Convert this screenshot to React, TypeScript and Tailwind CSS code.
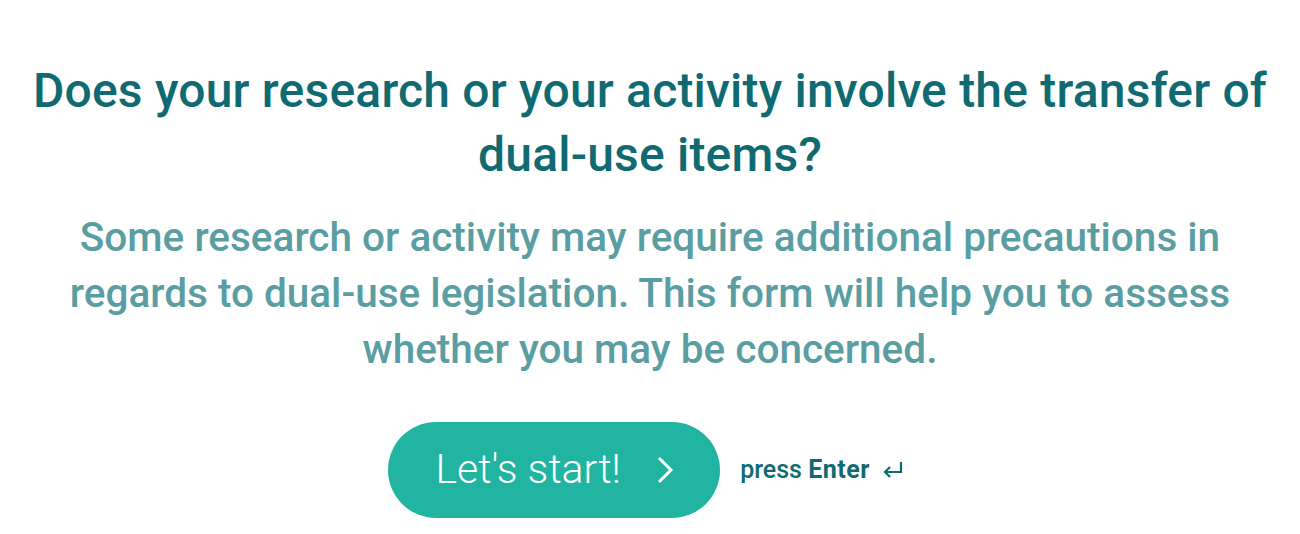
import React from 'react';

const ChevronRight = () => (
  <svg width="24" height="32" viewBox="0 0 24 32" fill="none" stroke="currentColor" strokeWidth="3" strokeLinecap="square">
    <path d="M7 5 L18 16 L7 27" />
  </svg>
);

const ReturnArrow = () => (
  <svg width="22" height="18" viewBox="0 0 22 18" fill="none" stroke="currentColor" strokeWidth="2.2">
    <path d="M19 1 V11 H3" />
    <path d="M8 6 L3 11 L8 16" />
  </svg>
);

export default function App() {
  return (
    <div className="w-full h-[534px] bg-white flex flex-col items-center pt-[59px]" style={{ fontFamily: 'Roboto, "Liberation Sans", sans-serif' }}>
      <h1 className="text-center text-[48px] leading-[64px] font-medium text-[#0f6a72] tracking-[0.2px] whitespace-nowrap">
        Does your research or your activity involve the transfer of
        <br />
        dual-use items?
      </h1>
      <p className="mt-[22px] text-center text-[40.5px] leading-[56px] font-medium text-[#5a9da2] w-[1200px]">
        Some research or activity may require additional precautions in regards to dual-use legislation. This form will help you to assess whether you may be concerned.
      </p>
      <div className="mt-[45px] flex items-center -translate-x-[4px]">
        <button className="h-[96px] w-[332px] rounded-full bg-[#21b4a1] text-white flex items-center justify-center gap-[32px] pl-[4px]">
          <span className="text-[41px] font-light">Let's start!</span>
          <ChevronRight />
        </button>
        <div className="ml-5 flex items-center gap-[12px] text-[#0f6a72] text-[25px]">
          <span>
            <span className="font-medium">press </span>
            <span className="font-bold tracking-[0.5px]">Enter</span>
          </span>
          <ReturnArrow />
        </div>
      </div>
    </div>
  );
}
